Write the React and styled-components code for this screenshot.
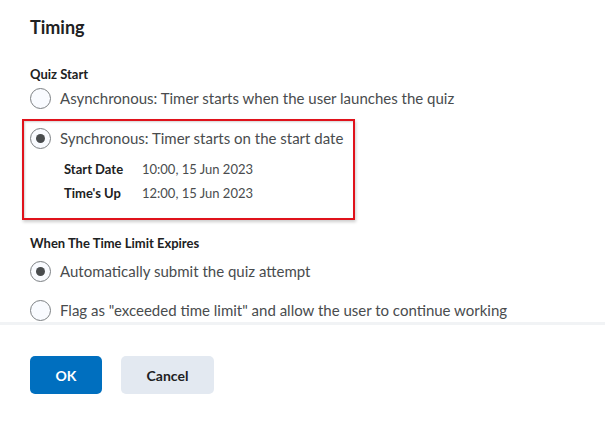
import React from "react";
import styled, { createGlobalStyle } from "styled-components";

const Global = createGlobalStyle`
  html, body { margin: 0; padding: 0; background: #ffffff; }
  body { font-family: Lato, "Noto Sans", sans-serif; color: #494c4e; }
  * { box-sizing: border-box; }
`;

const Dialog = styled.div`
  width: 605px;
  height: 424px;
  display: flex;
  flex-direction: column;
  background: #ffffff;
  overflow: hidden;
`;

const Body = styled.div`
  padding: 16px 30px 0 30px;
  height: 322px;
  display: flex;
  flex-direction: column;
`;

const Title = styled.h2`
  margin: 0;
  font-size: 18px;
  line-height: 22px;
  font-weight: 700;
  color: #202122;
`;

const SectionLabel = styled.div`
  margin-top: ${(p) => p.$top}px;
  font-size: 13px;
  line-height: 16px;
  font-weight: 700;
  color: #202122;
`;

const Option = styled.label`
  display: flex;
  align-items: center;
  gap: 9px;
  margin-top: ${(p) => p.$top}px;
  font-size: 15px;
  line-height: 22px;
  color: #494c4e;
`;

const Radio = styled.span`
  flex: none;
  width: 21px;
  height: 21px;
  border-radius: 50%;
  border: 1px solid #7c8083;
  background: #f9fbff;
  display: flex;
  align-items: center;
  justify-content: center;
  &::after {
    content: "";
    display: ${(p) => (p.$checked ? "block" : "none")};
    width: 9px;
    height: 9px;
    border-radius: 50%;
    background: #494c4e;
  }
`;

const Highlight = styled.div`
  margin: 10px 0 0 -8px;
  width: 333px;
  height: 101px;
  border: 2px solid #e0121b;
  box-shadow: inset 1px 1px 2px rgba(0, 0, 0, 0.18), 1px 2px 3px rgba(0, 0, 0, 0.2);
  padding: 6px 0 0 6px;
`;

const DateGrid = styled.div`
  display: grid;
  grid-template-columns: 78px auto;
  row-gap: 6px;
  margin: 11px 0 0 34px;
  font-size: 13px;
  line-height: 18px;
`;

const DateLabel = styled.span`
  font-weight: 700;
  color: #202122;
`;

const DateValue = styled.span`
  color: #494c4e;
`;

const Footer = styled.div`
  flex: 1;
  border-top: 3px solid #f1f3f5;
  padding: 31px 30px 0 30px;
  display: flex;
  gap: 19px;
  align-items: flex-start;
`;

const Button = styled.button`
  height: 38px;
  width: ${(p) => p.$w}px;
  border: none;
  border-radius: 5px;
  font-family: Lato, "Noto Sans", sans-serif;
  font-size: 14px;
  font-weight: 700;
  background: ${(p) => (p.$primary ? "#006fbf" : "#e3e9f1")};
  color: ${(p) => (p.$primary ? "#ffffff" : "#202122")};
  cursor: pointer;
`;

export default function App() {
  return (
    <>
      <Global />
      <Dialog>
        <Body>
          <Title>Timing</Title>
          <SectionLabel $top={28}>Quiz Start</SectionLabel>
          <Option $top={5}>
            <Radio />
            Asynchronous: Timer starts when the user launches the quiz
          </Option>
          <Highlight>
            <Option $top={0}>
              <Radio $checked />
              Synchronous: Timer starts on the start date
            </Option>
            <DateGrid>
              <DateLabel>Start Date</DateLabel>
              <DateValue>10:00, 15 Jun 2023</DateValue>
              <DateLabel>Time's Up</DateLabel>
              <DateValue>12:00, 15 Jun 2023</DateValue>
            </DateGrid>
          </Highlight>
          <SectionLabel $top={15}>When The Time Limit Expires</SectionLabel>
          <Option $top={9}>
            <Radio $checked />
            Automatically submit the quiz attempt
          </Option>
          <Option $top={17}>
            <Radio />
            Flag as "exceeded time limit" and allow the user to continue working
          </Option>
        </Body>
        <Footer>
          <Button $primary $w={72}>OK</Button>
          <Button $w={93}>Cancel</Button>
        </Footer>
      </Dialog>
    </>
  );
}
